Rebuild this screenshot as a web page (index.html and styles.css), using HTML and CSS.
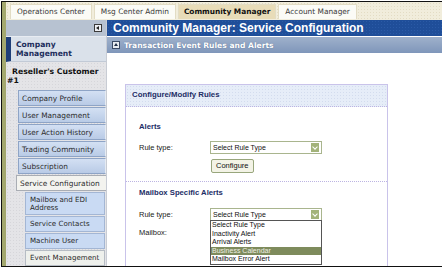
FILE: index.html
```html
<!DOCTYPE html>
<html lang="en">
<head>
  <meta charset="UTF-8" />
  <title>Community Manager: Service Configuration</title>
  <link rel="stylesheet" href="styles.css">
</head>
<body>

<div class="screen">
  <div class="tabs">
    <span class="tab">Operations Center</span>
    <span class="tab">Msg Center Admin</span>
    <span class="tab active">Community Manager</span>
    <span class="tab">Account Manager</span>
  </div>

  <div class="workspace">
    <aside class="side">
      <div class="side-head"><span class="collapse"></span></div>
      <div class="company">Company<br>Management</div>
      <div class="customer">Reseller's Customer<br>#1</div>
      <div class="menu">
        <div class="item">Company Profile</div>
        <div class="item">User Management</div>
        <div class="item">User Action History</div>
        <div class="item">Trading Community</div>
        <div class="item">Subscription</div>
        <div class="item open">Service Configuration</div>
        <div class="sub">Mailbox and EDI<br>Address</div>
        <div class="sub">Service Contacts</div>
        <div class="sub">Machine User</div>
        <div class="sub current">Event Management</div>
        <div class="sub"></div>
      </div>
    </aside>

    <main class="main">
      <div class="title">Community Manager: Service Configuration</div>
      <div class="subbar"><span class="toggle"></span>Transaction Event Rules and Alerts</div>

      <div class="panel">
        <div class="panel-head">Configure/Modify Rules</div>

        <div class="section">
          <div class="section-title">Alerts</div>
          <div class="row">
            <span class="label">Rule type:</span>
            <span class="select">Select Rule Type<span class="arrow"></span></span>
          </div>
          <div class="row btn-row">
            <span class="label"></span>
            <button class="btn">Configure</button>
          </div>
        </div>

        <div class="section dotted">
          <div class="section-title">Mailbox Specific Alerts</div>
          <div class="row">
            <span class="label">Rule type:</span>
            <span class="select">Select Rule Type<span class="arrow"></span>
              <ul class="options">
                <li>Select Rule Type</li>
                <li>Inactivity Alert</li>
                <li>Arrival Alerts</li>
                <li class="hl">Business Calendar</li>
                <li>Mailbox Error Alert</li>
              </ul>
            </span>
          </div>
          <div class="row mailbox-row">
            <span class="label">Mailbox:</span>
          </div>
        </div>
      </div>
    </main>
  </div>
</div>

</body>
</html>
```

FILE: styles.css
```css
html, body {
  margin: 0;
  padding: 0;
  background: #fff;
}
body {
  width: 442px;
  height: 270px;
  overflow: hidden;
  padding: 1px 0 0 1px;
  box-sizing: border-box;
  font-family: 'DejaVu Sans', Verdana, sans-serif;
}
.screen {
  height: 266px;
  border-top: 1px solid #111;
  border-bottom: 1px solid #111;
  border-left: 1px solid #111;
  box-shadow: inset 4px 0 0 #a3a86e;
  padding-left: 4px;
  display: flex;
  flex-direction: column;
  overflow: hidden;
  box-sizing: border-box;
}
.tabs {
  height: 18px;
  flex: none;
  display: flex;
  gap: 2px;
  padding: 2px 0 0 4px;
  box-sizing: border-box;
  background: #f1eddc;
  background-image: radial-gradient(#e3dcc4 0.6px, transparent 0.8px);
  background-size: 3px 3px;
}
.tab {
  height: 14px;
  line-height: 14px;
  padding: 0 6px;
  background: #fbfbf6;
  border: 1px solid #e2dcc4;
  border-bottom: none;
  font-size: 7.4px;
  color: #3a3a3a;
}
.tab.active {
  background: #e8dcb8;
  font-weight: bold;
  color: #111;
  padding: 0 5px;
}
.workspace {
  flex: 1;
  display: flex;
  min-height: 0;
}

/* left navigation */
.side {
  width: 100px;
  flex: none;
  background: #e4e4e7;
  background-image: radial-gradient(#d6d6da 0.6px, transparent 0.8px);
  background-size: 3px 3px;
  border-right: 1px solid #c8ccd4;
  overflow: hidden;
}
.side-head {
  height: 16px;
  background: #b7c2d1;
  border-bottom: 1px solid #e8ecf2;
  display: flex;
  justify-content: flex-end;
  align-items: center;
  padding-right: 4px;
}
.collapse {
  width: 6px;
  height: 6px;
  border: 1px solid #3a3a3a;
  background: #eef0f4;
  position: relative;
}
.collapse::after {
  content: "";
  position: absolute;
  left: 1px;
  top: 1px;
  border-right: 3px solid #222;
  border-top: 2px solid transparent;
  border-bottom: 2px solid transparent;
}
.company {
  height: 25px;
  background: #dae1ea;
  border-left: 5px solid #1f3f78;
  border-bottom: 1px solid #c2cad6;
  padding: 3px 0 0 5px;
  box-sizing: border-box;
  font-size: 7.6px;
  line-height: 9px;
  font-weight: bold;
  color: #1d2e5c;
}
.customer {
  padding: 5px 0 0 1px;
  height: 28px;
  box-sizing: border-box;
  font-size: 7.7px;
  line-height: 9px;
  font-weight: bold;
  color: #111;
  text-indent: 5px;
}
.menu {
  display: flex;
  flex-direction: column;
  gap: 1px;
  align-items: flex-end;
}
.item {
  width: 88px;
  height: 16px;
  line-height: 15px;
  box-sizing: border-box;
  padding-left: 3px;
  background: linear-gradient(#d3e0f3, #b9cbe6);
  border: 1px solid #8ea4c6;
  border-right-color: #e6ebf2;
  font-size: 7.4px;
  color: #2d2d2d;
  white-space: nowrap;
}
.item.open {
  width: 90px;
  background: #f3f3ef;
  border-color: #a9adb4;
  border-right: none;
}
.sub {
  width: 80px;
  margin-right: 1px;
  min-height: 16px;
  box-sizing: border-box;
  padding: 3px 0 2px 4px;
  background: #c9daf3;
  border: 1px solid #a3b6d4;
  font-size: 7.1px;
  line-height: 8px;
  color: #2a2a2a;
  white-space: nowrap;
}
.sub.current {
  background: #eef0ec;
  border-color: #b6bcc4;
}

/* main area */
.main {
  flex: 1;
  background: #fff;
  overflow: hidden;
}
.title {
  height: 16px;
  line-height: 16px;
  padding-left: 6px;
  background: #1f4e99;
  background-image: radial-gradient(#2a5aa6 0.6px, transparent 0.8px);
  background-size: 3px 3px;
  color: #fff;
  font-family: 'Liberation Sans', Arial, sans-serif;
  font-weight: bold;
  font-size: 12px;
  border-bottom: 1px solid #fff;
  white-space: nowrap;
}
.subbar {
  height: 16px;
  display: flex;
  align-items: center;
  gap: 4px;
  padding-left: 5px;
  background: linear-gradient(#9fb1cb, #7f96ba);
  color: #fff;
  font-size: 7.6px;
  font-weight: bold;
  text-shadow: 0 0 1px #4d648a;
  white-space: nowrap;
}
.toggle {
  width: 6px;
  height: 6px;
  border: 1px solid #3a4a66;
  background: #e8ecf2;
  position: relative;
}
.toggle::after {
  content: "";
  position: absolute;
  left: 1px;
  top: 1px;
  border-bottom: 3px solid #1f2f4a;
  border-left: 2px solid transparent;
  border-right: 2px solid transparent;
}
.panel {
  width: 263px;
  margin: 31px 0 0 18px;
  border: 1px solid #c9c3ea;
  height: 190px;
  box-sizing: border-box;
  font-family: 'Liberation Sans', Arial, sans-serif;
}
.panel-head {
  height: 21px;
  line-height: 20px;
  padding-left: 6px;
  background: #e6edf8;
  background-image: radial-gradient(#d3dcee 0.6px, transparent 0.8px);
  background-size: 3px 3px;
  border-bottom: 1px dotted #bcb4e2;
  font-size: 7.8px;
  font-weight: bold;
  color: #1d2e66;
}
.section {
  padding: 15px 0 8px 13px;
}
.section.dotted {
  border-top: 1px dotted #bcb4e2;
  padding-top: 6px;
}
.section-title {
  font-size: 7.7px;
  font-weight: bold;
  color: #1d2e66;
  height: 10px;
  line-height: 10px;
  margin-bottom: 9px;
}
.dotted .section-title {
  margin-bottom: 10px;
}
.row {
  display: flex;
  align-items: center;
  height: 13px;
  margin-bottom: 5px;
  font-size: 7.5px;
  color: #222;
}
.mailbox-row {
  margin-top: 1px;
}
.label {
  width: 71px;
  flex: none;
}
.select {
  width: 112px;
  height: 13px;
  box-sizing: border-box;
  border: 1px solid #a9b58e;
  padding-left: 2px;
  line-height: 11px;
  font-size: 7px;
  color: #111;
  position: relative;
  background: #fff;
}
.arrow {
  position: absolute;
  right: 2px;
  top: 1px;
  width: 8px;
  height: 9px;
  background: #a3b37a;
}
.arrow::after {
  content: "";
  position: absolute;
  left: 2px;
  top: 2px;
  width: 3px;
  height: 3px;
  border-right: 1px solid #fff;
  border-bottom: 1px solid #fff;
  transform: rotate(45deg);
}
.btn-row {
  height: 14px;
  margin-bottom: 0;
}
.btn {
  height: 14px;
  padding: 0 4px;
  margin-left: 1px;
  font-family: 'Liberation Sans', Arial, sans-serif;
  font-size: 7.5px;
  color: #111;
  background: #f3f3e6;
  border: 1px solid #98a67c;
  border-radius: 2px;
  line-height: 10px;
}
.options {
  position: absolute;
  left: -1px;
  top: 11px;
  width: 112px;
  margin: 0;
  padding: 0;
  list-style: none;
  background: #fff;
  border: 1px solid #555;
  box-sizing: border-box;
  z-index: 2;
}
.options li {
  height: 8.6px;
  line-height: 8.6px;
  padding-left: 1px;
  font-size: 7px;
  color: #111;
}
.options li.hl {
  background: #7e8b5c;
  color: #eef0e4;
}
```
